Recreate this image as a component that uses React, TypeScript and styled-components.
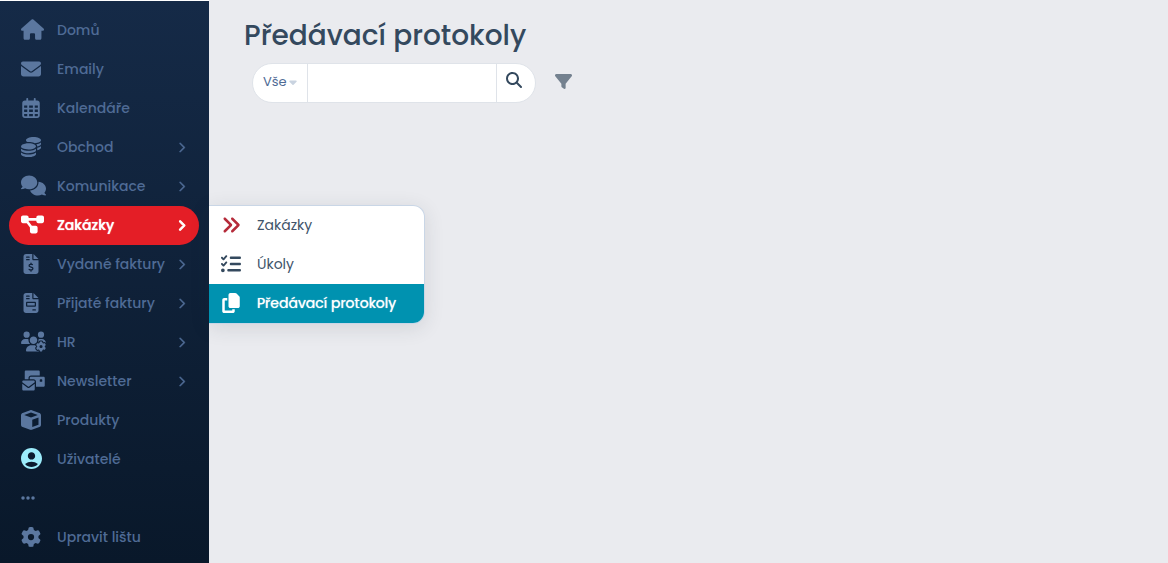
import React from "react";
import styled, { createGlobalStyle, css } from "styled-components";
import type { IconType } from "react-icons";
import {
  FaHouse,
  FaEnvelope,
  FaRegCalendarDays,
  FaCoins,
  FaComments,
  FaDiagramProject,
  FaFileInvoiceDollar,
  FaFileInvoice,
  FaUsersGear,
  FaEnvelopesBulk,
  FaCube,
  FaEllipsis,
  FaGear,
  FaChevronRight,
  FaAnglesRight,
  FaListCheck,
  FaCopy,
  FaMagnifyingGlass,
  FaFilter,
  FaCaretDown,
} from "react-icons/fa6";
import { MdAccountCircle } from "react-icons/md";

const GlobalStyle = createGlobalStyle`
  *, *::before, *::after { box-sizing: border-box; }
  body {
    margin: 0;
    background: #eaebef;
    color: #34495e;
    font-family: Poppins, Inter, "Noto Sans", sans-serif;
    font-size: 14px;
  }
  button, input, select { font: inherit; color: inherit; }
`;

const Page = styled.div`
  display: flex;
  min-height: 100vh;
`;

const Sidebar = styled.nav`
  flex: 0 0 209px;
  border-top: 1px solid #fff;
  background: linear-gradient(#152a47, #09182a);
`;

const Menu = styled.ul`
  list-style: none;
  margin: 0;
  padding: 10px 0 6px;
`;

const MenuItem = styled.li`
  position: relative;
  padding: 0 10px 0 9px;
`;

const MenuLink = styled.a<{ $active?: boolean }>`
  display: flex;
  align-items: center;
  height: 39px;
  padding: 0 12px 1px;
  border-radius: 20px;
  color: #4f6b95;
  font-weight: 500;
  text-decoration: none;
  ${(p) =>
    p.$active &&
    css`
      background: #e41e26;
      color: #fff;
      text-shadow: 0 0 1px #fff;
    `}
`;

const IconSlot = styled.span<{ $color?: string }>`
  display: flex;
  flex: 0 0 36px;
  padding-bottom: 1px;
  color: ${(p) => p.$color ?? "#5b779f"};
`;

const Label = styled.span`
  flex: 1;
  white-space: nowrap;
`;

const Submenu = styled.ul`
  position: absolute;
  z-index: 1;
  top: -1px;
  left: 100%;
  width: 216px;
  margin: 0;
  padding: 0;
  list-style: none;
  overflow: hidden;
  background: #fff;
  border: 1px solid #c9d6e6;
  border-left: 0;
  border-radius: 0 12px 12px 0;
  box-shadow: 0 4px 20px rgba(40, 50, 60, 0.12);
`;

const SubmenuLink = styled.a<{ $active?: boolean }>`
  display: flex;
  align-items: center;
  height: 39px;
  padding: 0 12px 1px;
  color: ${(p) => (p.$active ? "#fff" : "#41546a")};
  background: ${(p) => (p.$active ? "#0092b0" : "transparent")};
  text-shadow: ${(p) => (p.$active ? "0 0 1px #fff" : "none")};
  text-decoration: none;
`;

const Content = styled.main`
  flex: 1;
  min-width: 0;
  padding: 13px 35px;
`;

const Title = styled.h1`
  margin: 0 0 4px;
  color: #34495e;
  font-size: 28px;
  line-height: 46px;
  font-weight: 500;
`;

const Toolbar = styled.div`
  display: flex;
  align-items: center;
  gap: 19px;
  padding-left: 8px;
`;

const SearchForm = styled.form`
  display: flex;
  width: 284px;
  height: 40px;
  overflow: hidden;
  background: #fff;
  border: 1px solid #dfe3e9;
  border-radius: 20px;
`;

const ScopeField = styled.label`
  display: flex;
  align-items: center;
  flex: 0 0 55px;
  padding: 0 0 3px 10px;
  border-right: 1px solid #dfe3e9;
  color: #c9d3e0;
`;

const ScopeSelect = styled.select`
  appearance: none;
  width: 24px;
  padding: 0;
  border: 0;
  background: none;
  color: #4f6b95;
  font-size: 13px;
`;

const SearchInput = styled.input`
  flex: 1;
  min-width: 0;
  padding: 0 10px;
  border: 0;
  outline: 0;
  background: none;
`;

const SearchButton = styled.button`
  flex: 0 0 39px;
  padding: 0 4px 6px 0;
  border: 0;
  border-left: 1px solid #dfe3e9;
  background: none;
  line-height: 0;
`;

const FilterButton = styled.button`
  padding: 0 0 3px;
  border: 0;
  background: none;
  color: #74818f;
  line-height: 0;
`;

type Entry = {
  label: string;
  icon: IconType;
  size?: number;
  viewBox?: string;
  color?: string;
  nested?: boolean;
  active?: boolean;
};

const entries: Entry[] = [
  { label: "Domů", icon: FaHouse, size: 23 },
  { label: "Emaily", icon: FaEnvelope },
  { label: "Kalendáře", icon: FaRegCalendarDays },
  { label: "Obchod", icon: FaCoins, nested: true },
  { label: "Komunikace", icon: FaComments, size: 25, nested: true },
  { label: "Zakázky", icon: FaDiagramProject, size: 23, nested: true, active: true, color: "#fff" },
  { label: "Vydané faktury", icon: FaFileInvoiceDollar, nested: true },
  { label: "Přijaté faktury", icon: FaFileInvoice, nested: true },
  { label: "HR", icon: FaUsersGear, size: 25, nested: true },
  { label: "Newsletter", icon: FaEnvelopesBulk, size: 25, nested: true },
  { label: "Produkty", icon: FaCube },
  { label: "Uživatelé", icon: MdAccountCircle, size: 21, viewBox: "2 2 20 20", color: "#9cecfb" },
  { label: "", icon: FaEllipsis, size: 14, viewBox: "0 32 448 448" },
  { label: "Upravit lištu", icon: FaGear },
];

const subEntries: Entry[] = [
  { label: "Zakázky", icon: FaAnglesRight, color: "#b52b3a" },
  { label: "Úkoly", icon: FaListCheck, color: "#34495e" },
  { label: "Předávací protokoly", icon: FaCopy, color: "#fff", active: true },
];

function EntryIcon({ icon: Icon, size = 20, viewBox, color }: Entry) {
  return (
    <IconSlot $color={color}>
      {viewBox ? <Icon size={size} viewBox={viewBox} /> : <Icon size={size} />}
    </IconSlot>
  );
}

export default function App() {
  return (
    <>
      <GlobalStyle />
      <Page>
        <Sidebar>
          <Menu>
            {entries.map((entry) => (
              <MenuItem key={entry.label}>
                <MenuLink href="#" $active={entry.active} aria-label={entry.label || "Další"}>
                  <EntryIcon {...entry} />
                  <Label>{entry.label}</Label>
                  {entry.nested && (
                    <FaChevronRight size={11} stroke="currentColor" strokeWidth={entry.active ? 50 : 15} />
                  )}
                </MenuLink>
                {entry.active && (
                  <Submenu>
                    {subEntries.map((sub) => (
                      <li key={sub.label}>
                        <SubmenuLink href="#" $active={sub.active}>
                          <EntryIcon {...sub} />
                          <Label>{sub.label}</Label>
                        </SubmenuLink>
                      </li>
                    ))}
                  </Submenu>
                )}
              </MenuItem>
            ))}
          </Menu>
        </Sidebar>
        <Content>
          <Title>Předávací protokoly</Title>
          <Toolbar>
            <SearchForm role="search">
              <ScopeField>
                <ScopeSelect aria-label="Rozsah hledání">
                  <option>Vše</option>
                </ScopeSelect>
                <FaCaretDown size={12} />
              </ScopeField>
              <SearchInput type="text" aria-label="Hledat" />
              <SearchButton type="submit" aria-label="Hledat">
                <FaMagnifyingGlass size={16} />
              </SearchButton>
            </SearchForm>
            <FilterButton type="button" aria-label="Filtr">
              <FaFilter size={17} />
            </FilterButton>
          </Toolbar>
        </Content>
      </Page>
    </>
  );
}
